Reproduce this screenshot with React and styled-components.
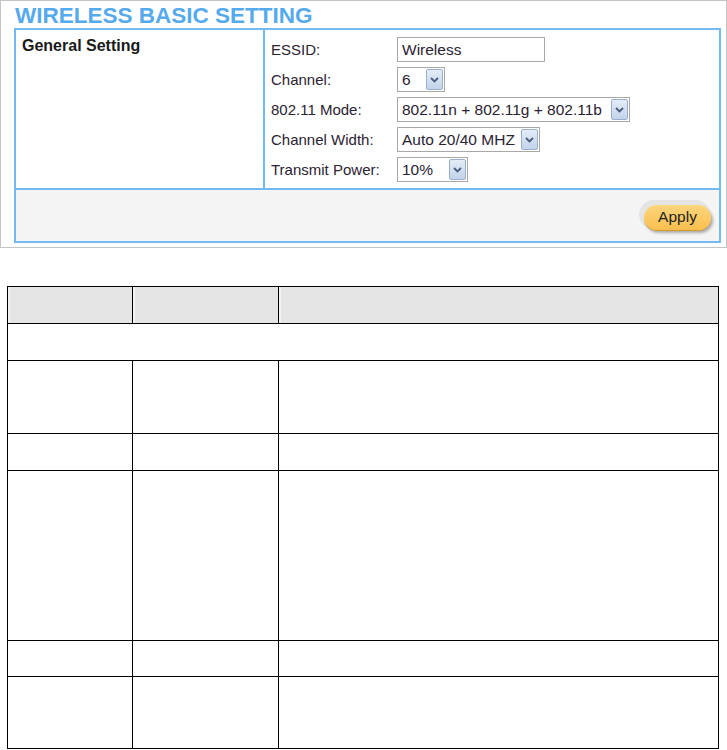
import React from "react";
import styled, { createGlobalStyle } from "styled-components";

const GlobalStyle = createGlobalStyle`
  html, body {
    margin: 0;
    padding: 0;
    background: #ffffff;
  }
  body {
    font-family: "Liberation Sans", Arial, sans-serif;
    color: #222;
  }
`;

// settings panel
const Frame = styled.div`
  width: 727px;
  height: 248px;
  box-sizing: border-box;
  border: 1px solid #c4c4c4;
  padding: 0 5px 4px 13px;
  display: flex;
  flex-direction: column;
`;

const Title = styled.h1`
  margin: 0;
  padding: 2px 0 0 1px;
  font-size: 22.5px;
  line-height: 25px;
  font-weight: bold;
  color: #55aaee;
`;

const SettingBox = styled.div`
  flex: 1;
  display: grid;
  grid-template-columns: 249px 1fr;
  grid-template-rows: 158px 1fr;
  border: 2px solid #74b9ef;
`;

const GroupName = styled.div`
  border-right: 2px solid #74b9ef;
  padding: 7px 6px;
  font-size: 16px;
  line-height: 18px;
  font-weight: bold;
  color: #1a1a1a;
`;

const Fields = styled.div`
  padding: 7px 6px 6px 6px;
  display: flex;
  flex-direction: column;
  gap: 5px;
`;

const FieldRow = styled.div`
  display: flex;
  align-items: center;
  height: 25px;
`;

const Label = styled.span`
  width: 126px;
  font-size: 15px;
  color: #2b2233;
`;

const TextInput = styled.div`
  width: ${(p) => p.width}px;
  height: 25px;
  box-sizing: border-box;
  border: 1px solid #a8a8a8;
  padding: 0 4px;
  font-size: 15.5px;
  line-height: 23px;
  color: #2b2233;
  background: #fff;
`;

const SelectBox = styled.div`
  width: ${(p) => p.width}px;
  height: 25px;
  box-sizing: border-box;
  border: 1px solid #a8a8a8;
  padding: 1px 1px 1px 4px;
  display: flex;
  align-items: center;
  justify-content: space-between;
  background: #fff;
  font-size: 15.5px;
  color: #2b2233;
  white-space: nowrap;
`;

const ArrowButton = styled.span`
  width: 17px;
  height: 21px;
  flex-shrink: 0;
  box-sizing: border-box;
  border: 1px solid #9aafcf;
  border-radius: 2px;
  background: linear-gradient(#e4ecf7, #c2d3ea);
  display: flex;
  align-items: center;
  justify-content: center;
`;

const Footer = styled.div`
  grid-column: 1 / span 2;
  border-top: 2px solid #74b9ef;
  background: #f4f4f4;
  display: flex;
  align-items: center;
  justify-content: flex-end;
  padding: 3px 8px 0 0;
`;

const ApplyButton = styled.button`
  width: 67px;
  height: 25px;
  border: none;
  border-radius: 13px;
  background: linear-gradient(#fdd57c, #f9bf4e);
  box-shadow: 0 1px 0 #d99a2c, 2px 3px 3px rgba(0, 0, 0, 0.3),
    -3px -3px 0 2px #e4e4e4;
  font-family: "Liberation Sans", Arial, sans-serif;
  font-size: 15.5px;
  color: #222;
  padding: 0;
`;

// reference table
const Grid = styled.table`
  margin: 38px 0 0 7px;
  width: 712px;
  border-collapse: collapse;
  table-layout: fixed;
`;

const HeadCell = styled.th`
  height: 36px;
  padding: 0;
  border: 1px solid #000;
  background: #e5e5e5;
  box-shadow: inset 2px 0 0 #f2f2f2;
`;

const Cell = styled.td`
  height: ${(p) => p.h}px;
  padding: 0;
  border: 1px solid #000;
`;

const Chevron = () => (
  <svg width="9" height="6" viewBox="0 0 9 6">
    <path d="M1 1 L4.5 4.5 L8 1" fill="none" stroke="#4a5d80" strokeWidth="1.8" />
  </svg>
);

const Select = ({ width, value }) => (
  <SelectBox width={width}>
    <span>{value}</span>
    <ArrowButton>
      <Chevron />
    </ArrowButton>
  </SelectBox>
);

const rows = [36, 72, 36, 169, 35, 71];

export default function App() {
  return (
    <>
      <GlobalStyle />
      <Frame>
        <Title>WIRELESS BASIC SETTING</Title>
        <SettingBox>
          <GroupName>General Setting</GroupName>
          <Fields>
            <FieldRow>
              <Label>ESSID:</Label>
              <TextInput width={148}>Wireless</TextInput>
            </FieldRow>
            <FieldRow>
              <Label>Channel:</Label>
              <Select width={48} value="6" />
            </FieldRow>
            <FieldRow>
              <Label>802.11 Mode:</Label>
              <Select width={233} value="802.11n + 802.11g + 802.11b" />
            </FieldRow>
            <FieldRow>
              <Label>Channel Width:</Label>
              <Select width={143} value="Auto 20/40 MHZ" />
            </FieldRow>
            <FieldRow>
              <Label>Transmit Power:</Label>
              <Select width={71} value="10%" />
            </FieldRow>
          </Fields>
          <Footer>
            <ApplyButton>Apply</ApplyButton>
          </Footer>
        </SettingBox>
      </Frame>

      <Grid>
        <colgroup>
          <col style={{ width: 125 }} />
          <col style={{ width: 146 }} />
          <col />
        </colgroup>
        <thead>
          <tr>
            <HeadCell />
            <HeadCell />
            <HeadCell />
          </tr>
        </thead>
        <tbody>
          <tr>
            <Cell h={rows[0]} colSpan={3} />
          </tr>
          {rows.slice(1).map((h, i) => (
            <tr key={i}>
              <Cell h={h} />
              <Cell h={h} />
              <Cell h={h} />
            </tr>
          ))}
        </tbody>
      </Grid>
    </>
  );
}
